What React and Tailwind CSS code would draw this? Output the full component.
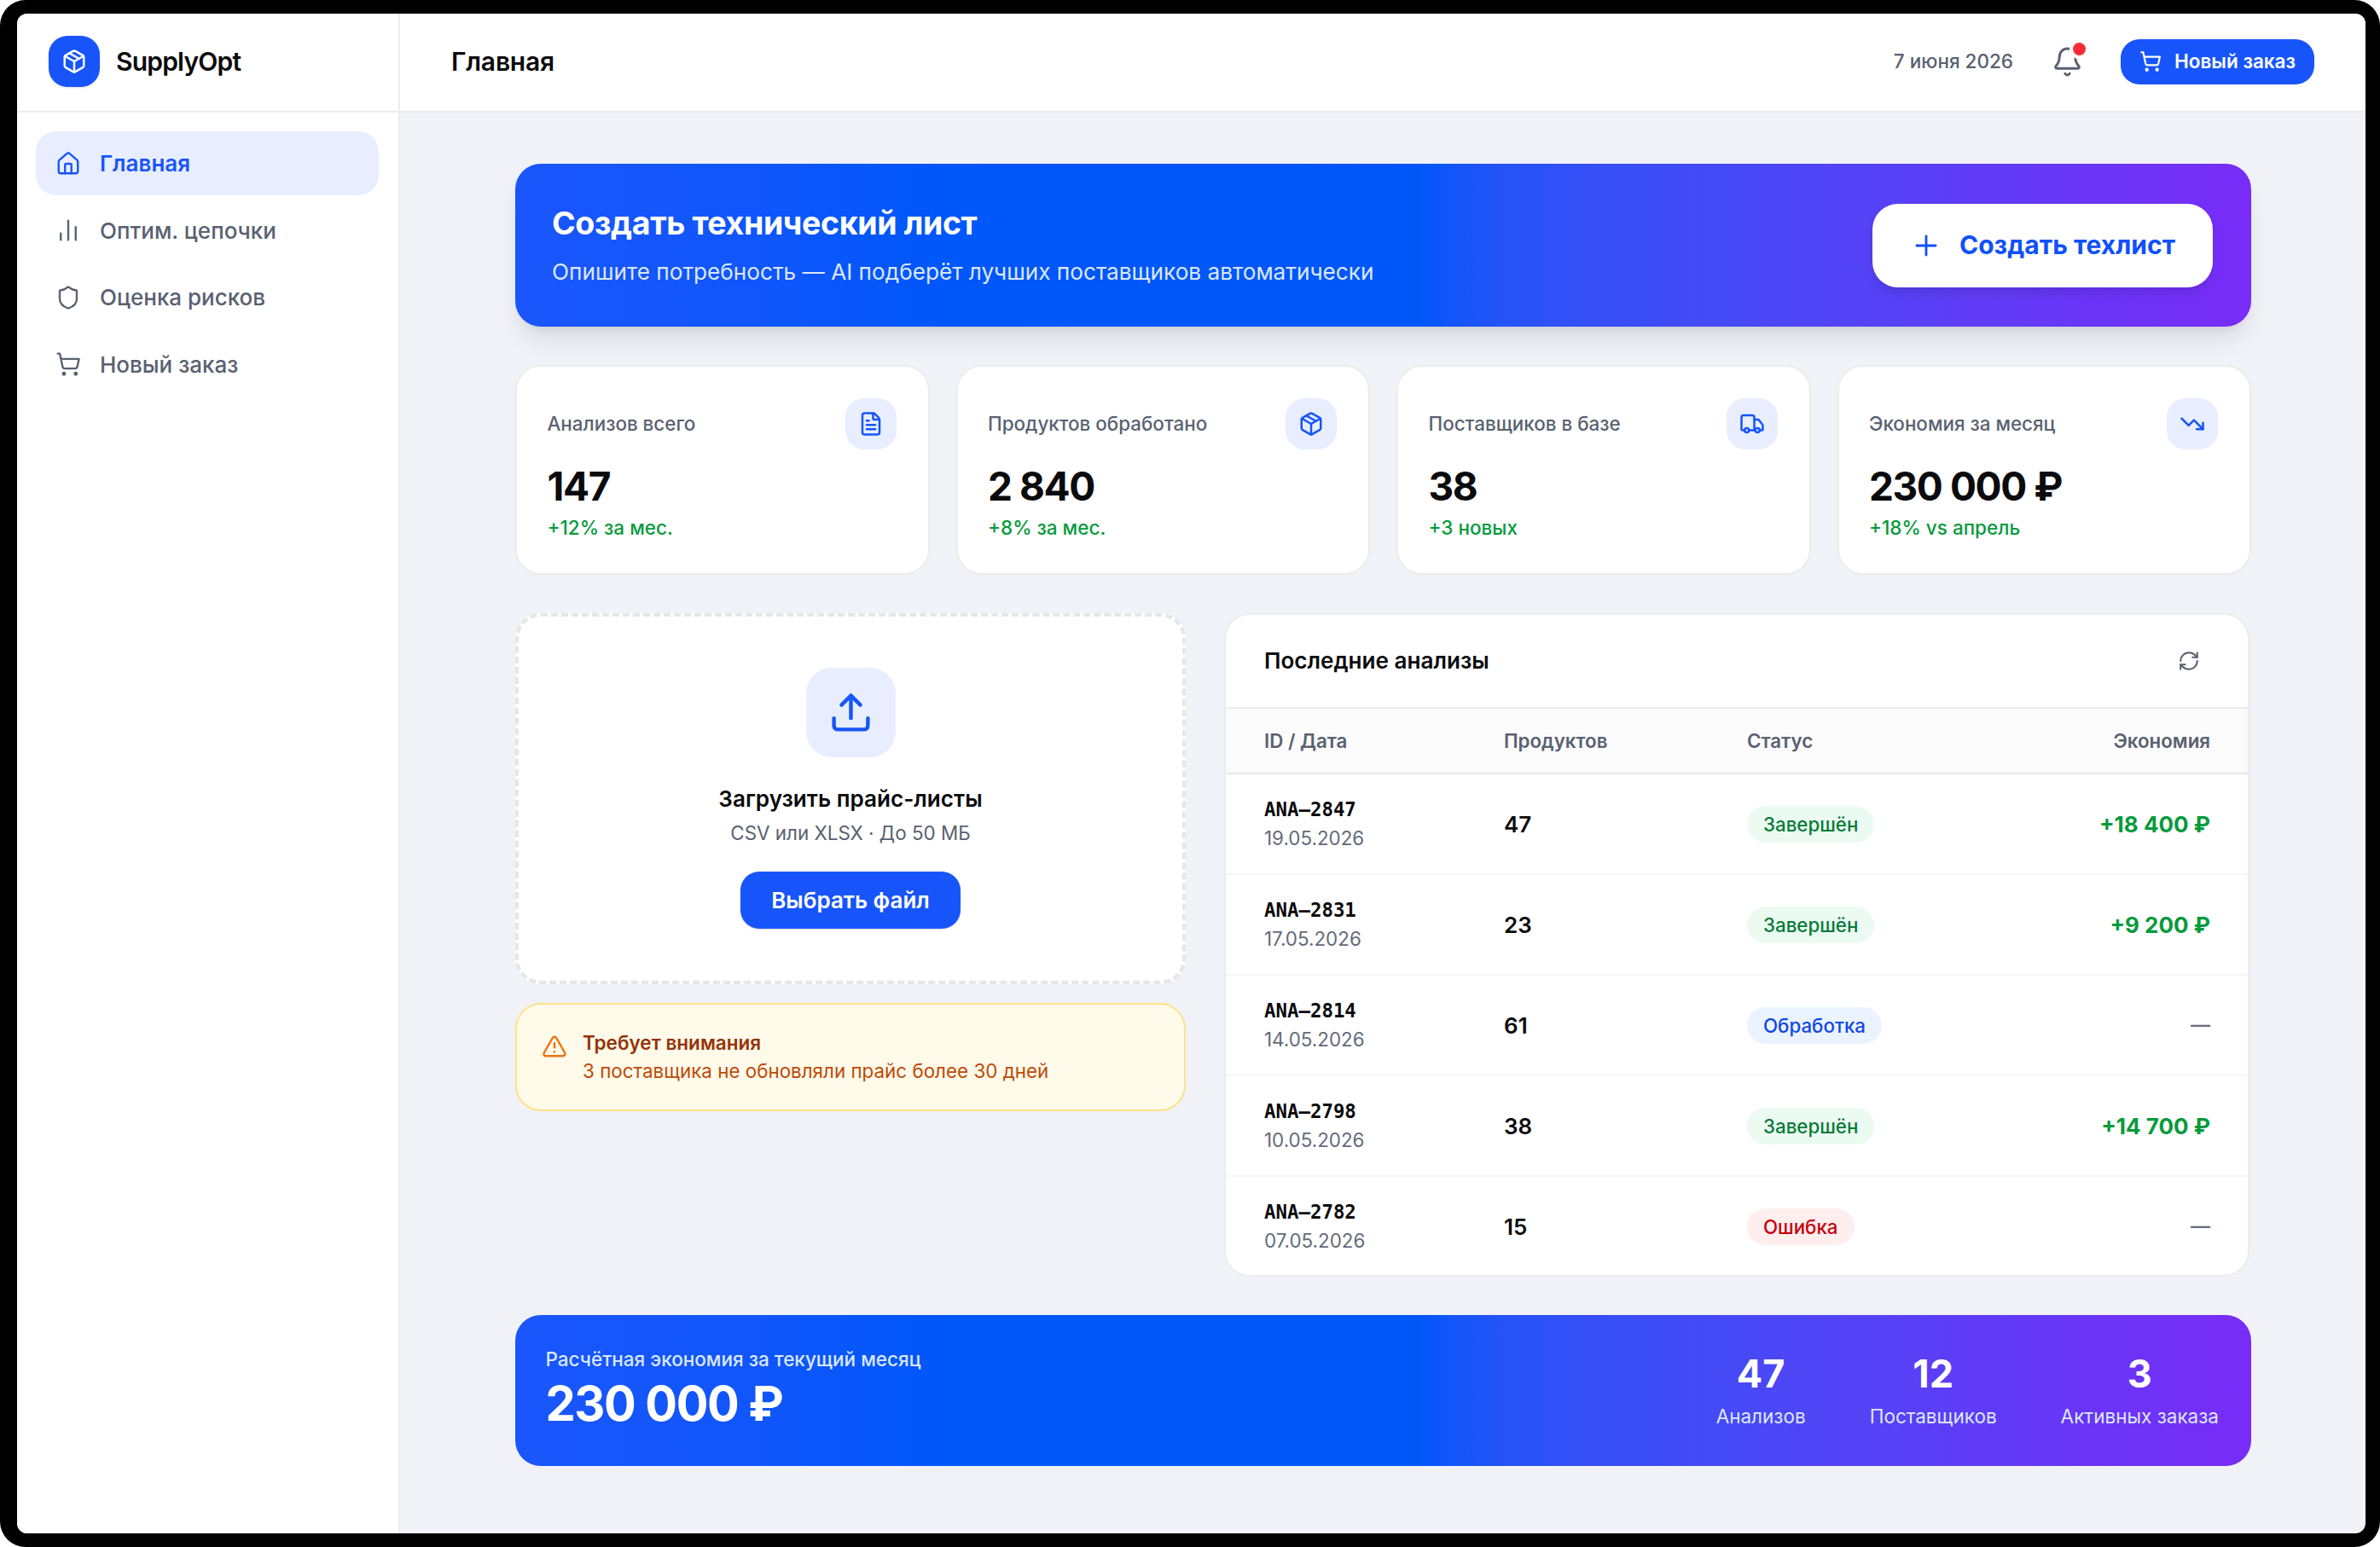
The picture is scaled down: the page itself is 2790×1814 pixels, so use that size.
import {
  Bell,
  ChartNoAxesColumn,
  FileText,
  House,
  Package,
  Plus,
  RefreshCw,
  Shield,
  ShoppingCart,
  TrendingDown,
  TriangleAlert,
  Truck,
  Upload,
} from 'lucide-react';

const navItems = [
  { label: 'Главная', icon: House, active: true },
  { label: 'Оптим. цепочки', icon: ChartNoAxesColumn },
  { label: 'Оценка рисков', icon: Shield },
  { label: 'Новый заказ', icon: ShoppingCart },
];

const stats = [
  { label: 'Анализов всего', value: '147', note: '+12% за мес.', icon: FileText },
  { label: 'Продуктов обработано', value: '2 840', note: '+8% за мес.', icon: Package },
  { label: 'Поставщиков в базе', value: '38', note: '+3 новых', icon: Truck },
  { label: 'Экономия за месяц', value: '230 000 ₽', note: '+18% vs апрель', icon: TrendingDown },
];

const analyses = [
  { id: 'ANA–2847', date: '19.05.2026', products: 47, status: 'done', saving: '+18 400 ₽' },
  { id: 'ANA–2831', date: '17.05.2026', products: 23, status: 'done', saving: '+9 200 ₽' },
  { id: 'ANA–2814', date: '14.05.2026', products: 61, status: 'processing', saving: null },
  { id: 'ANA–2798', date: '10.05.2026', products: 38, status: 'done', saving: '+14 700 ₽' },
  { id: 'ANA–2782', date: '07.05.2026', products: 15, status: 'error', saving: null },
];

const statuses = {
  done: { label: 'Завершён', className: 'bg-[#ebfbf1] text-[#067a37]' },
  processing: { label: 'Обработка', className: 'bg-[#eaf3ff] text-[#1047e8]' },
  error: { label: 'Ошибка', className: 'bg-[#feeeee] text-[#c6000f]' },
};

const totals = [
  { value: '47', label: 'Анализов' },
  { value: '12', label: 'Поставщиков' },
  { value: '3', label: 'Активных заказа' },
];

const columns = 'grid grid-cols-[281px_285px_1fr_auto] items-center pl-[45px] pr-[44px]';

const gradient =
  'bg-[linear-gradient(90deg,#1a56fb_0%,#1056fa_14%,#0057fa_25%,#0057f9_52%,#1455f8_54%,#2453f7_57%,#3050f7_60%,#444af6_69%,#5244f6_76%,#782cf7_100%)]';

function Sidebar() {
  return (
    <aside className="w-[449px] shrink-0 bg-white border-r-2 border-[#ececec]">
      <div className="h-[116px] flex items-center pl-[37px] pb-[2px] border-b-2 border-[#ececec]">
        <div className="w-[60px] h-[60px] rounded-[22px] bg-[#1755fa] flex items-center justify-center shadow-sm">
          <Package size={30} className="text-white" />
        </div>
        <span className="ml-[19px] text-[30px] leading-[40px] font-semibold tracking-[-0.8px] text-[#0b0b0d]">
          SupplyOpt
        </span>
      </div>
      <nav className="pt-[22px] pl-[22px] pr-[23px] flex flex-col gap-[3.5px]">
        {navItems.map(({ label, icon: Icon, active }) => (
          <a
            key={label}
            className={
              active
                ? 'h-[75px] flex items-center gap-[22px] pl-[23px] rounded-[24px] bg-[#e8eeff] text-[#1755fa] text-[26px] font-semibold'
                : 'h-[75px] flex items-center gap-[22px] pl-[23px] rounded-[24px] text-[#596170] text-[26px] font-medium'
            }
          >
            <Icon size={30} strokeWidth={1.9} />
            {label}
          </a>
        ))}
      </nav>
    </aside>
  );
}

function Header() {
  return (
    <header className="h-[116px] bg-white border-b-2 border-[#ececec] flex items-center justify-between pb-[2px] pl-[60px] pr-[60px]">
      <h1 className="text-[30px] font-semibold tracking-[-0.2px] text-[#0b0b0d]">Главная</h1>
      <div className="flex items-center">
        <span className="text-[22.5px] font-medium text-[#596170]">7 июня 2026</span>
        <div className="relative ml-[45px]">
          <Bell size={37} strokeWidth={1.9} className="text-[#596170]" />
          <span className="absolute -top-[4px] left-[25px] w-[15px] h-[15px] rounded-full bg-[#fb2c36] ring-4 ring-white" />
        </div>
        <button className="ml-[44px] h-[53px] w-[227px] flex items-center justify-center gap-[15px] rounded-[22px] bg-[#1755fa] text-white text-[22.5px] font-semibold">
          <ShoppingCart size={26} />
          Новый заказ
        </button>
      </div>
    </header>
  );
}

function CreateBanner() {
  return (
    <section
      className={`h-[191px] rounded-[30px] flex items-center justify-between pl-[43px] pr-[45px] shadow-[0_19px_28px_-6px_rgba(0,0,0,0.1),0_7px_11px_-7px_rgba(0,0,0,0.1)] ${gradient}`}
    >
      <div>
        <h2 className="text-[37.5px] leading-[48px] font-bold tracking-[-0.37px] text-white">
          Создать технический лист
        </h2>
        <p className="mt-[14px] text-[26.2px] leading-[38px] text-[#dbe8ff]">
          Опишите потребность — AI подберёт лучших поставщиков автоматически
        </p>
      </div>
      <button className="h-[98px] w-[399px] flex items-center justify-center gap-[20px] rounded-[30px] bg-white text-[#1050fa] text-[30px] font-bold shadow-[0_8px_12px_-2px_rgba(0,0,0,0.12)]">
        <Plus size={38} strokeWidth={1.8} />
        Создать техлист
      </button>
    </section>
  );
}

function StatCard({ label, value, note, icon: Icon }) {
  return (
    <div className="h-[246px] rounded-[30px] border-2 border-[#ececee] bg-white p-[37px] pl-[35.5px]">
      <div className="flex items-center justify-between">
        <span className="text-[22.4px] font-medium text-[#596170]">{label}</span>
        <div className="w-[60px] h-[60px] rounded-[22px] bg-[#e8eeff] flex items-center justify-center">
          <Icon size={30} className="text-[#1755fa]" />
        </div>
      </div>
      <div className="mt-[13px] text-[46px] leading-[60px] font-bold tracking-[-1.4px] text-[#0b0b0d]">{value}</div>
      <div className="mt-[2.5px] text-[22.5px] leading-[33px] font-medium text-[#069a3c]">{note}</div>
    </div>
  );
}

function UploadCard() {
  return (
    <div className="h-[434.5px] rounded-[30px] border-4 border-dashed border-[#e6e6e8] bg-white flex flex-col items-center pt-[59.5px]">
      <div className="w-[105px] h-[105px] rounded-[30px] bg-[#e8eeff] flex items-center justify-center">
        <Upload size={53} className="text-[#1755fa]" />
      </div>
      <h3 className="mt-[30px] text-[26.1px] leading-[38px] font-semibold text-[#0b0b0d]">Загрузить прайс-листы</h3>
      <p className="mt-[4px] text-[22.4px] leading-[34px] text-[#596170]">CSV или XLSX · До 50 МБ</p>
      <button className="mt-[28.5px] w-[258px] h-[67px] rounded-[22px] bg-[#1755fa] text-white text-[26px] font-semibold shadow-sm">
        Выбрать файл
      </button>
    </div>
  );
}

function Warning() {
  return (
    <div className="mt-[22px] h-[127.5px] rounded-[30px] border-2 border-[#fee389] bg-[#fffaea] flex pl-[29px] pt-[28px]">
      <TriangleAlert size={30} className="mt-[6px] text-[#ec7412]" />
      <div className="ml-[18px]">
        <p className="text-[22.5px] leading-[33px] font-semibold text-[#943407]">Требует внимания</p>
        <p className="text-[22.4px] leading-[34px] text-[#bf4a06]">3 поставщика не обновляли прайс более 30 дней</p>
      </div>
    </div>
  );
}

function AnalysesTable() {
  return (
    <div className="h-[778px] rounded-[30px] border-2 border-[#ececee] bg-white overflow-hidden">
      <div className="h-[110px] flex items-center justify-between pl-[45px] pr-[56px] border-b-2 border-[#ececee]">
        <h3 className="text-[26.1px] font-semibold text-[#0b0b0d]">Последние анализы</h3>
        <RefreshCw size={26} strokeWidth={1.9} className="text-[#596170]" />
      </div>
      <div className="h-[77px] bg-[#fbfbfc] border-b-2 border-[#e8e8ea] text-[22.3px] font-semibold text-[#596170] flex flex-col justify-center">
        <div className={columns}>
          <span>ID / Дата</span>
          <span>Продуктов</span>
          <span>Статус</span>
          <span>Экономия</span>
        </div>
      </div>
      <div className="divide-y-2 divide-[#f6f6f7]">
        {analyses.map((row) => (
          <div key={row.id} className="h-[118px] last:h-[117px] flex flex-col justify-center">
            <div className={columns}>
              <div>
                <div className="font-['DejaVu_Sans_Mono',monospace] text-[22.4px] leading-[33px] font-bold text-[#0b0b0d]">
                  {row.id}
                </div>
                <div className="text-[22.4px] leading-[34px] text-[#636b7a]">{row.date}</div>
              </div>
              <span className="text-[26px] font-semibold text-[#0b0b0d]">{row.products}</span>
              <div>
                <span
                  className={`inline-block h-[43px] px-[19px] rounded-full text-[22.3px] leading-[43px] font-medium align-middle ${statuses[row.status].className}`}
                >
                  {statuses[row.status].label}
                </span>
              </div>
              {row.saving ? (
                <span className="text-[26px] font-bold text-[#069a3c]">{row.saving}</span>
              ) : (
                <span className="text-[23px] font-medium text-[#636b7a]">—</span>
              )}
            </div>
          </div>
        ))}
      </div>
    </div>
  );
}

function SavingsBanner() {
  return (
    <section className={`h-[176.5px] rounded-[30px] flex items-center justify-between pl-[35.5px] pr-[38px] ${gradient}`}>
      <div className="pb-[5px]">
        <p className="text-[22.5px] leading-[33px] font-medium text-[#dbe8ff]">Расчётная экономия за текущий месяц</p>
        <p className="mt-[4px] text-[56px] leading-[64px] font-bold tracking-[-1.4px] text-white">230 000 ₽</p>
      </div>
      <div className="flex gap-[75px] pb-[2px] text-center">
        {totals.map(({ value, label }) => (
          <div key={label}>
            <div className="text-[45px] leading-[60px] font-bold text-white">{value}</div>
            <div className="mt-[3px] text-[22.5px] leading-[33px] text-[#dbe8ff]">{label}</div>
          </div>
        ))}
      </div>
    </section>
  );
}

function App() {
  return (
    <div className="w-[2790px] h-[1814px] bg-black rounded-[30px] pt-[16px] pb-[16px] pl-[20px] pr-[17px] font-[Inter,sans-serif]">
      <div className="h-full rounded-[12px] overflow-hidden flex bg-[#f1f2f7]">
        <Sidebar />
        <div className="flex-1">
          <Header />
          <main className="w-[2035px] ml-[135px] pt-[60px]">
            <CreateBanner />
            <div className="mt-[44.5px] grid grid-cols-4 gap-[31px]">
              {stats.map((stat) => (
                <StatCard key={stat.label} {...stat} />
              ))}
            </div>
            <div className="mt-[45.5px] flex justify-between pr-[2px]">
              <div className="w-[786px]">
                <UploadCard />
                <Warning />
              </div>
              <div className="w-[1202px]">
                <AnalysesTable />
              </div>
            </div>
            <div className="mt-[45px]">
              <SavingsBanner />
            </div>
          </main>
        </div>
      </div>
    </div>
  );
}

export default App;
